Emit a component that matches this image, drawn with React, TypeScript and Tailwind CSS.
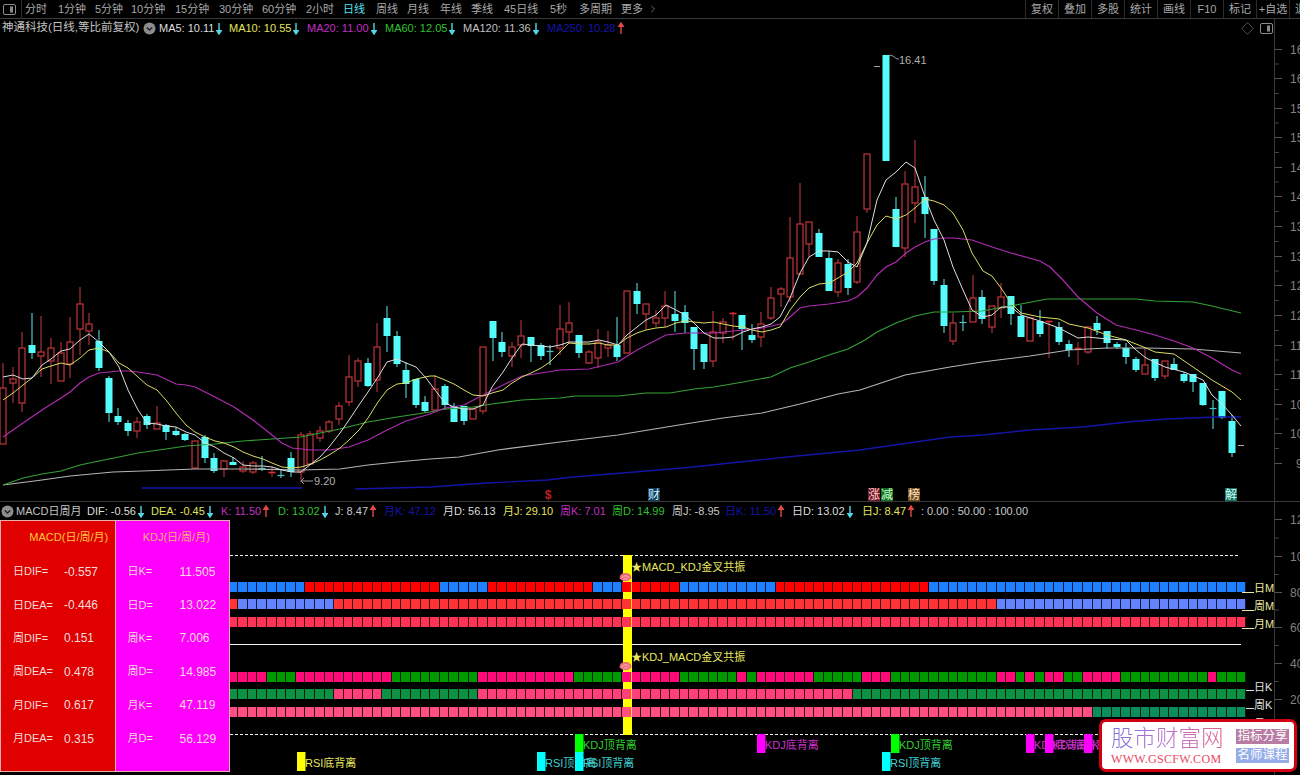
import React from "react"
import { ChevronRight, Diamond } from "lucide-react"

// [wickTop, bodyTop, bodyBottom, wickBottom, kind] kind: 0 cyan, 1 red hollow, 2 red doji, 3 grey dash
const candles: number[][] = [
  [363,388,444,444,1],[367,379,383,403,1],[332,348,403,412,1],[313,345,353,359,0],[316,352,356,377,1],
  [338,348,361,384,1],[342,353,381,381,1],[317,342,364,378,1],[287,304,329,355,1],[313,324,331,345,1],
  [330,341,368,371,0],[376,378,413,422,0],[408,416,422,425,0],[420,423,431,436,0],[417,422,431,438,1],
  [414,416,425,429,0],[406,423,429,429,1],[424,425,432,440,0],[427,431,435,436,0],[433,434,440,441,0],
  [441,441,468,468,1],[435,437,458,463,0],[453,458,471,473,0],[460,461,469,477,1],[457,462,465,465,0],
  [461,467,471,473,1],[461,463,472,474,1],[456,468,469,471,0],[466,472,473,477,2],[470,475,476,478,0],
  [452,458,472,477,0],[432,435,472,482,1],[431,434,464,464,1],[426,431,438,442,1],[420,422,431,433,1],
  [402,406,419,425,1],[355,377,402,406,1],[358,361,381,387,1],[358,363,386,387,0],[323,347,380,392,1],
  [306,318,336,352,0],[331,336,364,367,0],[362,370,384,398,0],[379,379,405,408,0],[396,402,411,413,0],
  [375,389,410,410,1],[384,386,405,410,0],[403,406,422,422,0],[406,406,421,425,0],[409,409,419,419,1],
  [347,347,411,414,1],[321,321,338,361,0],[332,342,352,357,0],[342,347,356,367,1],[320,336,345,358,1],
  [337,337,346,362,0],[343,345,356,360,0],[345,351,352,365,0],[305,329,348,355,1],[302,323,332,343,1],
  [335,335,353,358,0],[350,352,363,364,1],[329,342,358,368,1],[331,345,348,357,1],[317,345,357,361,0],
  [291,291,353,353,1],[283,291,304,314,0],[304,304,314,330,1],[310,318,323,327,1],[291,306,318,327,1],
  [291,314,321,332,0],[305,312,323,333,0],[327,327,349,370,0],[344,344,362,369,0],[311,332,361,367,1],
  [318,322,333,343,1],[312,313,315,340,2],[315,315,329,350,0],[324,335,340,343,0],[312,324,337,347,1],
  [287,298,318,320,1],[287,289,294,307,1],[217,258,297,302,1],[183,224,274,275,1],[222,222,244,257,1],
  [229,233,257,257,0],[251,258,291,291,0],[259,263,292,297,1],[259,264,288,295,0],[216,232,282,284,1],
  [154,154,209,213,1],[66,66,67,67,3],[55,55,161,161,0],[197,209,247,247,0],[171,184,248,257,1],
  [140,187,203,223,1],[176,197,214,238,0],[229,229,281,285,0],[279,285,326,333,0],[313,323,341,345,1],
  [315,322,323,331,0],[275,298,322,322,1],[290,297,319,324,0],[306,306,327,333,1],[283,297,308,318,1],
  [296,296,314,325,0],[305,316,337,337,0],[318,318,341,341,1],[310,321,334,337,0],[321,321,322,358,2],
  [322,327,342,345,0],[340,344,350,357,0],[342,348,349,365,2],[326,327,352,354,1],[316,323,330,335,0],
  [331,331,343,349,0],[342,344,347,349,0],[343,348,357,364,0],[357,359,370,372,0],[348,365,374,374,1],
  [359,359,378,381,0],[361,361,376,379,1],[358,364,370,370,0],[372,374,381,383,0],[374,374,382,392,0],
  [383,383,405,406,0],[400,408,409,429,0],[391,391,418,419,0],[415,421,453,457,0],
]

const ma5 = "3,377 13,375 23,379 32,378 42,365 51,359 61,351 70,349 80,340 89,334 99,342 109,352 119,367 128,390 138,410 147,423 157,424 166,426 176,427 186,432 195,435 205,443 215,447 224,453 234,458 243,465 253,466 263,466 272,467 282,470 292,472 301,472 311,464 320,457 329,447 340,433 349,420 359,405 368,392 378,377 387,362 397,359 406,363 416,367 426,378 435,390 445,403 454,407 464,409 473,409 483,405 492,387 503,372 512,358 522,344 531,345 541,346 550,347 560,345 569,342 580,342 589,342 599,340 608,342 618,345 627,335 637,327 646,320 656,315 666,305 676,310 685,315 694,323 704,333 714,338 723,338 733,337 743,332 752,329 762,327 771,324 780,317 790,298 800,273 809,257 819,251 829,251 838,252 848,262 857,267 867,243 877,200 886,180 896,172 906,162 915,168 925,197 934,220 944,240 953,267 963,290 972,310 983,317 992,315 1001,307 1011,307 1021,315 1040,321 1059,328 1078,338 1088,337 1107,339 1126,340 1136,350 1146,358 1165,367 1184,372 1203,380 1212,395 1223,405 1232,415 1241,426"
const ma10 = "3,400 13,393 23,385 32,378 42,369 51,366 61,363 70,365 80,358 89,350 99,348 109,352 119,363 128,368 138,377 147,385 157,390 166,400 176,413 186,425 195,432 205,437 215,441 224,443 234,447 243,452 253,456 263,459 272,463 282,467 292,468 301,467 311,464 320,460 329,455 340,448 349,440 359,430 368,418 378,402 387,390 397,384 406,383 416,379 430,376 435,376 445,380 454,384 464,390 473,395 483,396 492,393 503,390 512,383 522,377 531,373 541,368 550,362 560,352 569,343 580,344 589,344 599,343 608,345 618,345 627,338 637,333 646,330 656,328 666,327 676,323 685,321 694,322 704,323 714,322 723,324 733,326 743,327 752,330 762,332 771,330 780,327 790,310 800,297 809,288 819,284 829,283 838,278 848,272 857,263 867,243 877,225 886,216 896,219 906,215 915,208 925,199 934,201 944,205 953,213 963,230 972,253 983,271 992,276 1001,288 1011,303 1021,313 1040,317 1059,319 1069,324 1088,328 1107,335 1126,340 1146,348 1155,352 1174,354 1193,367 1212,380 1232,392 1241,400"
const ma20 = "3,437 23,423 42,410 61,398 70,392 80,383 89,377 99,373 109,372 119,371 128,371 138,372 157,375 176,384 186,385 195,387 215,397 234,407 253,420 272,435 282,443 292,448 311,450 329,450 349,447 368,440 387,430 406,421 430,414 445,408 464,405 483,395 503,385 522,376 541,373 560,370 589,369 618,362 637,350 666,335 685,333 714,333 743,330 762,328 781,324 790,317 800,308 809,306 829,304 848,301 857,297 867,288 877,275 886,267 896,262 906,253 915,247 925,242 934,239 944,238 953,238 972,240 992,247 1011,253 1040,261 1050,267 1063,280 1078,297 1097,313 1116,325 1136,330 1155,335 1174,341 1193,348 1212,358 1232,370 1241,374"
const ma60 = "3,485 23,478 42,474 61,471 80,465 99,461 119,457 138,453 166,449 186,446 215,444 243,441 272,439 301,437 320,433 340,429 368,422 397,417 430,412 445,409 473,407 492,404 522,400 560,398 575,396 618,396 646,393 670,393 694,389 714,387 743,382 771,377 790,368 809,362 829,355 848,349 865,340 877,332 896,323 915,316 934,312 953,312 982,311 1021,304 1047,299 1136,299 1155,301 1193,302 1212,306 1241,313"
const ma120 = "3,485 42,480 70,476 113,472 142,471 195,469 243,469 301,470 340,469 368,465 397,462 430,459 459,457 498,450 560,442 618,435 685,424 723,418 762,413 800,404 838,394 860,390 905,375 950,367 982,362 1030,356 1069,350 1107,348 1146,348 1193,349 1241,353"
const ma250a = "142,488 302,488"
const ma250b = "355,489 430,487 487,483 547,480 573,477 647,471 693,467 740,462 797,456 860,450 950,437 983,435 1030,430 1083,427 1127,422 1167,419 1217,417 1241,417"

const tools = [
  { label: "分时", w: "w-[33px]" },
  { label: "1分钟", w: "w-[37px]" },
  { label: "5分钟", w: "w-[36px]" },
  { label: "10分钟", w: "w-[44px]" },
  { label: "15分钟", w: "w-[44px]" },
  { label: "30分钟", w: "w-[43px]" },
  { label: "60分钟", w: "w-[44px]" },
  { label: "2小时", w: "w-[37px]" },
  { label: "日线", w: "w-[33px]", active: true },
  { label: "周线", w: "w-[31px]" },
  { label: "月线", w: "w-[33px]" },
  { label: "年线", w: "w-[31px]" },
  { label: "季线", w: "w-[33px]" },
  { label: "45日线", w: "w-[46px]" },
  { label: "5秒", w: "w-[29px]" },
  { label: "多周期", w: "w-[42px]" },
  { label: "更多", w: "w-[26px]" },
]

const rightTools = ["复权", "叠加", "多股", "统计", "画线", "F10", "标记", "+自选", "退出"]

const maLegend = [
  { text: "MA5: 10.11", color: "text-[#dddddd]", w: "w-[70px]", arrow: "down" },
  { text: "MA10: 10.55", color: "text-[#e4e45c]", w: "w-[78px]", arrow: "down" },
  { text: "MA20: 11.00", color: "text-[#c030c0]", w: "w-[78px]", arrow: "down" },
  { text: "MA60: 12.05", color: "text-[#30c030]", w: "w-[78px]", arrow: "down" },
  { text: "MA120: 11.36", color: "text-[#c0c0c0]", w: "w-[84px]", arrow: "down" },
  { text: "MA250: 10.28", color: "text-[#1414a8]", w: "w-[84px]", arrow: "up" },
]

const subLegend = [
  { text: "DIF: -0.56", color: "text-[#dddddd]", w: "w-[64px]", arrow: "down" },
  { text: "DEA: -0.45", color: "text-[#e4e45c]", w: "w-[70px]", arrow: "down" },
  { text: "K: 11.50", color: "text-[#c030c0]", w: "w-[57px]", arrow: "up" },
  { text: "D: 13.02", color: "text-[#30c030]", w: "w-[57px]", arrow: "down" },
  { text: "J: 8.47", color: "text-[#c8c8c8]", w: "w-[49px]", arrow: "up" },
  { text: "月K: 47.12", color: "text-[#1414a8]", w: "w-[59px]" },
  { text: "月D: 56.13", color: "text-[#dddddd]", w: "w-[60px]" },
  { text: "月J: 29.10", color: "text-[#e4e45c]", w: "w-[57px]" },
  { text: "周K: 7.01", color: "text-[#c030c0]", w: "w-[52px]" },
  { text: "周D: 14.99", color: "text-[#30c030]", w: "w-[60px]" },
  { text: "周J: -8.95", color: "text-[#c8c8c8]", w: "w-[53px]" },
  { text: "日K: 11.50", color: "text-[#1414a8]", w: "w-[67px]", arrow: "up" },
  { text: "日D: 13.02", color: "text-[#dddddd]", w: "w-[70px]", arrow: "down" },
  { text: "日J: 8.47", color: "text-[#e4e45c]", w: "w-[59px]", arrow: "up" },
  { text: ": 0.00 : 50.00 : 100.00", color: "text-[#c8c8c8]", w: "w-[120px]" },
]

const macdRows = [
  ["日DIF=", "-0.557"],
  ["日DEA=", "-0.446"],
  ["周DIF=", "0.151"],
  ["周DEA=", "0.478"],
  ["月DIF=", "0.617"],
  ["月DEA=", "0.315"],
]
const kdjRows = [
  ["日K=", "11.505"],
  ["日D=", "13.022"],
  ["周K=", "7.006"],
  ["周D=", "14.985"],
  ["月K=", "47.119"],
  ["月D=", "56.129"],
]

// [first, last, colour] runs of the square rows, candle index based
const rows: { y: number; runs: [number, number, string][] }[] = [
  { y: 582, runs: [[24,31,"#1e80ff"],[32,45,"#ff0000"],[46,50,"#1e80ff"],[51,61,"#ff0000"],[62,64,"#1e80ff"],[65,70,"#ff0000"],[71,80,"#1e80ff"],[81,96,"#ff0000"],[97,129,"#1e80ff"]] },
  { y: 599, runs: [[24,24,"#ff3333"],[25,34,"#6484ff"],[35,103,"#ff3333"],[104,129,"#6484ff"]] },
  { y: 617, runs: [[24,129,"#ff3355"]] },
  { y: 672, runs: [[24,27,"#ff0a78"],[28,30,"#009a00"],[31,40,"#ff0a78"],[41,49,"#009a00"],[50,59,"#ff0a78"],[60,64,"#009a00"],[65,70,"#ff0a78"],[71,76,"#009a00"],[77,77,"#ff0a78"],[78,78,"#009a00"],[79,84,"#ff0a78"],[85,89,"#009a00"],[90,92,"#ff0a78"],[93,103,"#009a00"],[104,105,"#ff0a78"],[106,106,"#009a00"],[107,107,"#ff0a78"],[108,108,"#009a00"],[109,110,"#ff0a78"],[111,112,"#009a00"],[113,116,"#ff0a78"],[117,125,"#009a00"],[126,126,"#ff0a78"],[127,129,"#009a00"]] },
  { y: 689, runs: [[24,34,"#0c9242"],[35,39,"#ff3f7a"],[40,49,"#0c9242"],[50,88,"#ff3f7a"],[89,129,"#0c9242"]] },
  { y: 707, runs: [[24,113,"#ff4f80"],[114,129,"#0c8d5c"]] },
]

const upperTicks: [number, string][] = [
  [49,"16"],[78,"16"],[108,"15"],[137,"15"],[167,"14"],[196,"14"],[226,"13"],[256,"13"],
  [285,"12"],[315,"12"],[345,"11"],[374,"11"],[404,"10"],[433,"10"],[463,"9"],
]
const lowerTicks: [number, string][] = [[519,"12"],[556,"10"],[592,"80"],[627,"60"],[663,"40"],[699,"20"]]

const signals = [
  { x: 297, y: 752, color: "#ffff00", text: "RSI底背离", fill: "#e8e860" },
  { x: 537, y: 752, color: "#00ffff", text: "RSI顶背离", fill: "#40d0d0" },
  { x: 575, y: 734, color: "#00ff00", text: "KDJ顶背离", fill: "#30d030" },
  { x: 575, y: 752, color: "#00ffff", text: "RSI顶背离", fill: "#40d0d0" },
  { x: 757, y: 734, color: "#ff00ff", text: "KDJ底背离", fill: "#d030d0" },
  { x: 891, y: 734, color: "#00ff00", text: "KDJ顶背离", fill: "#30d030" },
  { x: 882, y: 752, color: "#00ffff", text: "RSI顶背离", fill: "#40d0d0" },
  { x: 1026, y: 734, color: "#ff00ff", text: "KDJ底背离", fill: "#d030d0" },
  { x: 1045, y: 734, color: "#ff00ff", text: "KDJ底背离", fill: "#d030d0" },
  { x: 1084, y: 734, color: "#ff00ff", text: "KDJ底背离", fill: "#d030d0" },
]

const cx = (i: number) => Math.round(3 + 9.6 * i)

function Arrow({ dir }: { dir?: string }) {
  if (!dir) return null
  const down = dir === "down"
  return (
    <svg width="6" height="13" viewBox="0 0 6 13" className={down ? "ml-[2px] shrink-0 text-[#50d8e8]" : "ml-[2px] shrink-0 text-[#e04848]"}>
      {down ? (
        <path d="M3 1V10M0.8 8.6L3 12L5.2 8.6Z" stroke="currentColor" strokeWidth="1.4" fill="currentColor" />
      ) : (
        <path d="M3 12V3M0.8 4.4L3 1L5.2 4.4Z" stroke="currentColor" strokeWidth="1.4" fill="currentColor" />
      )}
    </svg>
  )
}

function RoundToggle() {
  return (
    <svg width="13" height="13" viewBox="0 0 13 13" className="shrink-0">
      <circle cx="6.5" cy="6.5" r="6" fill="#8c8c8c" />
      <path d="M3.8 5.4L6.5 8.1L9.2 5.4" stroke="#222" strokeWidth="1.4" fill="none" />
    </svg>
  )
}

function PanelIcon() {
  return (
    <svg width="13" height="11" viewBox="0 0 13 11" className="shrink-0">
      <rect x="0.5" y="0.5" width="12" height="10" rx="1.5" fill="none" stroke="#8c8c8c" />
      <rect x="7" y="2.5" width="3" height="6" fill="#8c8c8c" />
    </svg>
  )
}

function Gem({ y }: { y: number }) {
  return (
    <g transform={`translate(625.5 ${y})`}>
      <path d="M-6 1.5Q-6 -4 0 -4Q6 -4 6 1.5L2.5 4H-2.5Z" fill="#ee6a78" />
      <path d="M-4 1Q0 -3.5 4 1M-2 2.5Q0 0.5 2 2.5" stroke="#ffc8cc" strokeWidth="1" fill="none" />
    </g>
  )
}

function Candle({ c, i }: { c: number[]; i: number }) {
  const [wt, bt, bb, wb, kind] = c
  const x = cx(i)
  if (kind === 3) return <line x1={x - 3} x2={x + 3} y1={wt + 0.5} y2={wt + 0.5} stroke="#a0a0a0" strokeWidth="1" />
  if (kind === 2)
    return (
      <g stroke="#e02c34">
        <line x1={x} x2={x} y1={wt} y2={wb} stroke="#b83238" />
        <line x1={x - 3.5} x2={x + 3.5} y1={bt + 0.5} y2={bt + 0.5} strokeWidth="1.6" />
      </g>
    )
  if (kind === 1)
    return (
      <g>
        <line x1={x} x2={x} y1={wt} y2={wb} stroke="#a83236" strokeWidth="1.2" />
        <rect x={x - 3} y={bt} width={6} height={bb - bt} fill="#000" stroke="#b43236" strokeWidth="1.3" />
      </g>
    )
  return (
    <g>
      <line x1={x} x2={x} y1={wt} y2={wb} stroke="#4cc4c8" strokeWidth="1.2" />
      {bb - bt <= 1 ? (
        <line x1={x - 3.5} x2={x + 3.5} y1={bt + 0.5} y2={bt + 0.5} stroke="#4cc4c8" strokeWidth="1.2" />
      ) : (
        <rect x={x - 3.5} y={bt} width={7} height={bb - bt} fill="#54fcfc" />
      )}
    </g>
  )
}

function Tag({ x, text, bg, fg }: { x: number; text: string; bg: string; fg: string }) {
  return (
    <g>
      <rect x={x - 6} y={488} width={12} height={13} fill={bg} />
      <text x={x} y={499} textAnchor="middle" fontSize="12" fill={fg}>{text}</text>
    </g>
  )
}

function PriceChart() {
  return (
    <svg width="1275" height="482" viewBox="0 19 1275 482" className="block">
      {candles.map((c, i) => <Candle key={i} c={c} i={i} />)}
      <polyline points={ma250a} fill="none" stroke="#1414a8" strokeWidth="1.3" />
      <polyline points={ma250b} fill="none" stroke="#1414a8" strokeWidth="1.3" />
      <polyline points={ma120} fill="none" stroke="#b4b4b4" strokeWidth="1.2" />
      <polyline points={ma60} fill="none" stroke="#34a034" strokeWidth="1.2" />
      <polyline points={ma20} fill="none" stroke="#b02cb0" strokeWidth="1.2" />
      <polyline points={ma10} fill="none" stroke="#dcdc64" strokeWidth="1" />
      <polyline points={ma5} fill="none" stroke="#dedede" strokeWidth="1" />

      <path d="M889 55Q893 55 897 59H899" stroke="#999" fill="none" />
      <text x="899" y="64" fontSize="11" fill="#b0b0b0">16.41</text>
      <path d="M313 481H301M304 478L301 481L304 484" stroke="#999" fill="none" />
      <text x="314" y="485" fontSize="11" fill="#b0b0b0">9.20</text>
      <line x1="1238" x2="1244" y1="445.5" y2="445.5" stroke="#b0b0b0" />

      <text x="548" y="499" textAnchor="middle" fontSize="12" fontWeight="700" fill="#c02020">$</text>
      <Tag x={654} text="财" bg="#123a5a" fg="#d0f0ff" />
      <Tag x={874} text="涨" bg="#701828" fg="#ffd0d0" />
      <Tag x={887} text="减" bg="#107020" fg="#d0ffd0" />
      <Tag x={914} text="榜" bg="#70481c" fg="#ffe8c0" />
      <Tag x={1231} text="解" bg="#107068" fg="#d0fff0" />
    </svg>
  )
}

function SignalChart() {
  return (
    <svg width="1045" height="255" viewBox="230 520 1045 255" className="block">
      <line x1="230" x2="1240" y1="555.5" y2="555.5" stroke="#f0f0f0" strokeDasharray="3 2" />
      <line x1="230" x2="1241" y1="644.5" y2="644.5" stroke="#f0f0f0" />
      <line x1="230" x2="1240" y1="734.5" y2="734.5" stroke="#f0f0f0" strokeDasharray="3 2" />

      <rect x="623" y="555" width="9" height="180" fill="#ffff00" />
      {rows.map((r) =>
        r.runs.map(([a, b, color]) =>
          Array.from({ length: b - a + 1 }, (_, k) => {
            const i = a + k
            const left = Math.round(9.6 * i - 1.8)
            const right = Math.round(9.6 * (i + 1) - 1.8)
            return <rect key={`${r.y}-${i}`} x={left} y={r.y} width={right - left - 0.8} height={10} fill={color} />
          })
        )
      )}
      <Gem y={577} />
      <Gem y={666} />
      <text x="631" y="571" fontSize="11" fill="#e8e860">★MACD_KDJ金叉共振</text>
      <text x="631" y="661" fontSize="11" fill="#e8e860">★KDJ_MACD金叉共振</text>

      {["日M", "周M", "月M"].map((t, i) => (
        <g key={t}>
          <line x1="1242" x2="1254" y1={592.5 + i * 18} y2={592.5 + i * 18} stroke="#e8e8a0" />
          <text x="1254" y={592 + i * 18} fontSize="11" fill="#e8e8a0">{t}</text>
        </g>
      ))}
      {["日K", "周K", "月K"].map((t, i) => (
        <g key={t}>
          <line x1="1246" x2="1254" y1={690.5 + i * 18} y2={690.5 + i * 18} stroke="#e0e0e0" />
          <text x="1254" y={691 + i * 18} fontSize="11" fill="#e0e0e0">{t}</text>
        </g>
      ))}

      {signals.map((s, i) => (
        <g key={i}>
          <text x={s.x + 8} y={s.y + 15} fontSize="11" fill={s.fill}>{s.text}</text>
          <rect x={s.x} y={s.y} width={8.5} height={19} fill={s.color} />
        </g>
      ))}
    </svg>
  )
}

function Axis({ ticks, top, height }: { ticks: [number, string][]; top: number; height: number }) {
  return (
    <svg width="25" height={height} viewBox={`1275 ${top} 25 ${height}`} className="block shrink-0">
      {ticks.map(([y, label], i) => {
        const next = ticks[i + 1]
        return (
          <g key={y}>
            <line x1="1275" x2="1282" y1={y + 0.5} y2={y + 0.5} stroke="#555" />
            {next && <line x1="1275" x2="1279" y1={(y + next[0]) / 2 + 0.5} y2={(y + next[0]) / 2 + 0.5} stroke="#444" />}
            <text x={label.length === 1 ? 1296 : 1290} y={y + 5} fontSize="12" fill="#808080">{label}</text>
          </g>
        )
      })}
    </svg>
  )
}

function ValueTable({ title, titleCls, rows, bg, labelW }: { title: string; titleCls: string; rows: string[][]; bg: string; labelW: string }) {
  return (
    <div className={`w-[115px] flex flex-col ${bg}`}>
      <div className={`h-[33px] flex items-center justify-center text-[11px] ${titleCls}`}>{title}</div>
      <div className="flex-1 flex flex-col pt-px">
        {rows.map(([label, value]) => (
          <div key={label} className="flex h-[33.4px] items-center pl-[12px] text-[#f4dcdc]">
            <span className={`${labelW} shrink-0 text-[11px]`}>{label}</span>
            <span className="text-[12px]">{value}</span>
          </div>
        ))}
      </div>
    </div>
  )
}

export default function App() {
  return (
    <div className="relative w-[1300px] h-[775px] overflow-hidden bg-black flex flex-col text-[11px] leading-none whitespace-nowrap [font-family:'Liberation_Sans','Noto_Sans_CJK_SC',sans-serif]">
      {/* toolbar */}
      <div className="h-[19px] shrink-0 flex items-center border-b border-[#3a3a3a] text-[#a8a8a8]">
        <div className="w-[22px] h-full flex items-center pl-[3px] border-r border-[#2c2c2c] shrink-0">
          <PanelIcon />
        </div>
        <div className="flex items-center pl-[3px]">
          {tools.map((t) => (
            <span key={t.label} className={`${t.w} shrink-0 ${t.active ? "text-[#50e0f0]" : ""}`}>{t.label}</span>
          ))}
          <ChevronRight size={12} strokeWidth={1.2} />
        </div>
        <div className="ml-auto w-[275px] h-full flex overflow-hidden shrink-0">
          {rightTools.map((t) => (
            <span key={t} className="w-[33px] shrink-0 h-full flex items-center justify-center border-l border-[#2c2c2c]">{t}</span>
          ))}
        </div>
      </div>

      {/* price pane */}
      <div className="h-[482px] shrink-0 flex">
        <div className="relative w-[1275px] shrink-0">
          <PriceChart />
          <div className="absolute left-[2px] top-0 h-[18px] flex items-center">
            <span className="w-[141px] shrink-0 text-[11.5px] text-[#c4c4c4]">神通科技(日线,等比前复权)</span>
            <RoundToggle />
            <span className="w-[3px] shrink-0" />
            {maLegend.map((m) => (
              <span key={m.text} className={`${m.w} shrink-0 flex items-center ${m.color}`}>
                {m.text}
                <Arrow dir={m.arrow} />
              </span>
            ))}
          </div>
          <div className="absolute right-[2px] top-[3px] flex items-center gap-[6px]">
            <Diamond size={13} strokeWidth={1} className="text-[#8c8c8c]" />
            <PanelIcon />
          </div>
        </div>
        <div className="border-l border-[#3a3a3a] -ml-px">
          <Axis ticks={upperTicks} top={19} height={482} />
        </div>
      </div>

      {/* indicator pane */}
      <div className="flex-1 flex border-t border-[#3a3a3a]">
        <div className="w-[1275px] shrink-0 flex flex-col">
          <div className="h-[18px] shrink-0 flex items-center pl-[1px]">
            <RoundToggle />
            <span className="w-[73px] shrink-0 pl-[2px] text-[#c4c4c4]">MACD日周月</span>
            {subLegend.map((m) => (
              <span key={m.text} className={`${m.w} shrink-0 flex items-center ${m.color}`}>
                {m.text}
                <Arrow dir={m.arrow} />
              </span>
            ))}
          </div>
          <div className="flex-1 flex">
            <div className="w-[230px] shrink-0 h-[252px] flex border border-[#e8b0b0] box-border">
              <ValueTable title="MACD(日/周/月)" titleCls="pl-[22px] text-[#ffc83c]" rows={macdRows} bg="bg-[#e00000]" labelW="w-[51px]" />
              <div className="w-px bg-[#e8b0b0] shrink-0" />
              <ValueTable title="KDJ(日/周/月)" titleCls="pl-[8px] text-[#ffb070]" rows={kdjRows} bg="bg-[#ff00ff]" labelW="w-[52px]" />
            </div>
            <SignalChart />
          </div>
        </div>
        <div className="border-l border-[#3a3a3a] -ml-px">
          <Axis ticks={lowerTicks} top={502} height={273} />
        </div>
      </div>

      {/* watermark */}
      <div className="absolute left-[1099px] top-[719px] w-[198px] h-[53px] box-border bg-white border-[3px] border-[#d00010] rounded-[7px] flex items-center pl-[9px]">
        <div className="w-[125px] shrink-0 flex flex-col">
          <span className="text-[22.5px] font-light leading-[26px] bg-gradient-to-r from-[#7a70dc] via-[#c070c8] to-[#e85868] bg-clip-text text-transparent">股市财富网</span>
          <span className="mt-[1px] text-[12px] tracking-[0.3px] text-[#e84860] [font-family:'Liberation_Serif',serif]">WWW.GSCFW.COM</span>
        </div>
        <div className="flex flex-col gap-[4px]">
          <span className="w-[53px] h-[15px] flex items-center justify-center bg-[#b87ca4] text-white text-[12.5px]">指标分享</span>
          <span className="w-[53px] h-[15px] flex items-center justify-center bg-[#94ace8] text-white text-[12.5px]">名师课程</span>
        </div>
      </div>
    </div>
  )
}
